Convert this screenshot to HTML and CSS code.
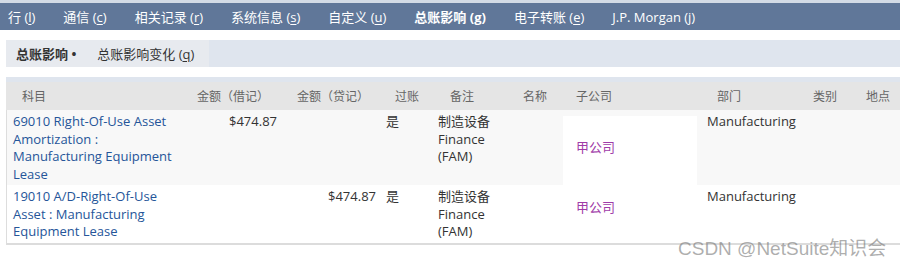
FILE: index.html
```html
<!DOCTYPE html>
<html lang="zh">
<head>
    <meta charset="UTF-8">
    <meta name="viewport" content="width=device-width, initial-scale=1.0">
    <title>总账影响</title>
    <link rel="stylesheet" href="styles.css">
</head>
<body>
    <!-- Główne zakładki -->
    <div class="nav">
        <a class="nav-item">行 (<u>l</u>)</a>
        <a class="nav-item">通信 (<u>c</u>)</a>
        <a class="nav-item">相关记录 (<u>r</u>)</a>
        <a class="nav-item">系统信息 (<u>s</u>)</a>
        <a class="nav-item">自定义 (<u>u</u>)</a>
        <a class="nav-item active">总账影响 (g)</a>
        <a class="nav-item">电子转账 (<u>e</u>)</a>
        <a class="nav-item">J.P. Morgan (j)</a>
    </div>

    <!-- Podzakładki -->
    <div class="subtabs">
        <div class="subtab-group">
            <span class="subtab active">总账影响 •</span>
            <span class="subtab">总账影响变化 (<u>q</u>)</span>
        </div>
    </div>

    <!-- Tabela -->
    <div class="gl">
        <div class="gl-head">
            <span>科目</span>
            <span>金额（借记）</span>
            <span>金额（贷记）</span>
            <span>过账</span>
            <span>备注</span>
            <span>名称</span>
            <span>子公司</span>
            <span>部门</span>
            <span>类别</span>
            <span>地点</span>
        </div>

        <div class="gl-row shaded">
            <div class="cell account"><a>69010 Right-Of-Use Asset Amortization : Manufacturing Equipment Lease</a></div>
            <div class="cell num">$474.87</div>
            <div class="cell num"></div>
            <div class="cell">是</div>
            <div class="cell memo">制造设备 Finance (FAM)</div>
            <div class="cell"></div>
            <div class="cell sub">甲公司</div>
            <div class="cell dept">Manufacturing</div>
            <div class="cell"></div>
            <div class="cell"></div>
        </div>

        <div class="gl-row last">
            <div class="cell account"><a>19010 A/D-Right-Of-Use Asset : Manufacturing Equipment Lease</a></div>
            <div class="cell num"></div>
            <div class="cell num">$474.87</div>
            <div class="cell">是</div>
            <div class="cell memo">制造设备 Finance (FAM)</div>
            <div class="cell"></div>
            <div class="cell sub">甲公司</div>
            <div class="cell dept">Manufacturing</div>
            <div class="cell"></div>
            <div class="cell"></div>
        </div>
    </div>

    <div class="watermark">CSDN @NetSuite知识会</div>
</body>
</html>
```

FILE: styles.css
```css
body {
    font-family: "Open Sans", "Noto Sans CJK SC", sans-serif;
    font-size: 13px;
    margin: 0;
    padding: 0;
    background-color: #ffffff;
    color: #333333;
    position: relative;
    height: 266px;
    overflow: hidden;
}

u {
    text-decoration-thickness: 1px;
    text-underline-offset: 2px;
}

/* Górny pasek zakładek */
.nav {
    display: flex;
    align-items: center;
    gap: 28px;
    height: 27px;
    padding-left: 8px;
    border-top: 3px solid #d3dbe6;
    background-color: #607799;
}

.nav-item {
    position: relative;
    color: #ffffff;
    white-space: nowrap;
}

.nav-item.active {
    font-weight: bold;
}

.nav-item.active::after {
    content: "";
    position: absolute;
    left: 50%;
    bottom: -9px;
    margin-left: -7px;
    border-left: 7px solid transparent;
    border-right: 7px solid transparent;
    border-bottom: 5px solid #ffffff;
}

/* Podzakładki */
.subtabs {
    display: flex;
    height: 27px;
    margin: 10px 0 0 6px;
    background-color: #dfe5ee;
}

.subtab-group {
    display: flex;
    align-items: center;
    gap: 21px;
    padding: 0 15px 0 10px;
    background-color: #e7eaef;
}

.subtab {
    position: relative;
    color: #333333;
}

.subtab.active {
    font-weight: bold;
}

.subtab.active::after {
    content: "";
    position: absolute;
    left: 50%;
    bottom: -9px;
    margin-left: -7px;
    border-left: 7px solid transparent;
    border-right: 7px solid transparent;
    border-bottom: 5px solid #ffffff;
}

/* Tabela */
.gl {
    margin-left: 6px;
    padding-top: 10px;
}

.gl-head {
    display: grid;
    grid-template-columns: 175px 100px 98px 55px 73px 53px 141px 96px 53px 1fr;
    align-items: center;
    height: 28px;
    padding-left: 16px;
    border-top: 5px solid #dfe5ee;
    background-color: #e5e5e5;
    color: #666666;
    font-size: 12px;
    white-space: nowrap;
}

.gl-row {
    display: grid;
    grid-template-columns: 175px 100px 99px 51px 83px 48px 134px 108px 53px 1fr;
    border-left: 1px solid #dddddd;
    line-height: 17.5px;
}

.gl-row.shaded {
    background-color: #f8f8f8;
}

.gl-row.last {
    border-bottom: 2px solid #dcdcdc;
}

.cell {
    padding: 3px 5px 2px 5px;
}

.cell.account {
    padding-left: 6px;
    padding-right: 4px;
}

.cell.account a {
    color: #255599;
}

.cell.num {
    text-align: right;
}

.cell.memo {
    padding-left: 6px;
}

.cell.sub {
    display: flex;
    align-items: center;
    margin-top: 6px;
    padding: 0 13px 6px 13px;
    background-color: #ffffff;
    color: #a03ca8;
}

.gl-row.last .cell.sub {
    padding-bottom: 19px;
}

.cell.dept {
    padding-left: 10px;
}

.watermark {
    position: absolute;
    left: 678px;
    top: 233px;
    font-family: "Liberation Sans", "Noto Sans CJK SC", sans-serif;
    font-size: 19px;
    color: rgba(120, 120, 120, 0.6);
    white-space: nowrap;
}
```
